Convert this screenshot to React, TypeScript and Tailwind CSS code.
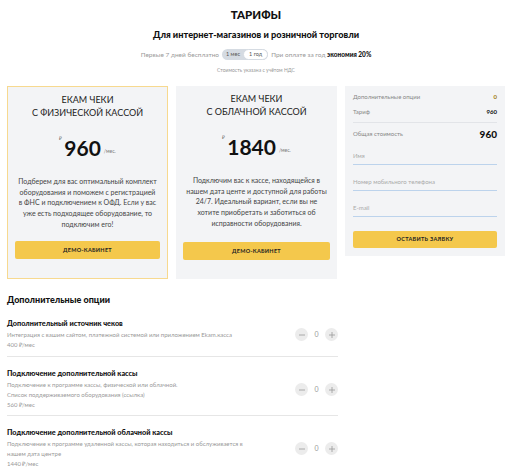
import React from 'react';

const font = { fontFamily: 'Lato, "Open Sans", "Liberation Sans", sans-serif' };

const Stepper: React.FC = () => (
  <div className="flex items-center gap-[6px]">
    <button className="flex h-[13px] w-[13px] items-center justify-center rounded-full bg-[#ececec] text-[#9a9a9a]">
      <svg width="8" height="8" viewBox="0 0 8 8"><path d="M1 4h6" stroke="currentColor" strokeWidth="0.8" /></svg>
    </button>
    <span className="w-[5px] text-center text-[7px] text-[#999]">0</span>
    <button className="flex h-[13px] w-[13px] items-center justify-center rounded-full bg-[#ececec] text-[#9a9a9a]">
      <svg width="8" height="8" viewBox="0 0 8 8"><path d="M1 4h6M4 1v6" stroke="currentColor" strokeWidth="0.8" /></svg>
    </button>
  </div>
);

const options = [
  {
    title: 'Дополнительный источник чеков',
    desc: ['Интеграция с вашим сайтом, платежной системой или приложением Ekam.касса'],
    price: '400 ₽/мес',
  },
  {
    title: 'Подключение дополнительной кассы',
    desc: ['Подключение к программе кассы, физической или облачной.', 'Список поддерживаемого оборудования (ссылка)'],
    price: '560 ₽/мес',
  },
  {
    title: 'Подключение дополнительной облачной кассы',
    desc: ['Подключение к программе удаленной кассы, которая находиться и обслуживается в', 'нашем дата центре'],
    price: '1440 ₽/мес',
  },
];

const TariffCard: React.FC<{ line2: string; price: string; lines: string[]; active?: boolean }> = ({ line2, price, lines, active }) => (
  <div className={`flex h-[193px] w-[161px] flex-col items-center bg-[#f3f4f6] px-[7px] pt-[6px] ${active ? 'border border-[#f7d98f]' : ''}`}>
    <div className="text-center text-[9px] leading-[13px] text-[#222]">
      <div>ЕКАМ ЧЕКИ</div>
      <div>{line2}</div>
    </div>
    <div className="mt-[15px] flex h-[28px] items-start">
      <span className="mt-[1px] text-[5px] text-[#555]">₽</span>
      <span className="ml-[2px] text-[21px] font-bold leading-[28px] text-[#111]">{price}</span>
      <span className="ml-[3px] mt-[14px] text-[5px] text-[#777]">/мес.</span>
    </div>
    <div className="mt-[14px] text-center text-[7px] leading-[10.7px] text-[#444]">
      {lines.map((l, i) => (
        <div key={i} className="whitespace-nowrap">{l}</div>
      ))}
    </div>
    <div className="flex-1" />
    <button className="mb-[19px] h-[18px] w-full rounded-[2px] bg-[#f4c84c] text-[5.5px] font-bold tracking-[0.3px] text-[#222]">
      ДЕМО-КАБИНЕТ
    </button>
  </div>
);

const Field: React.FC<{ label: string; first?: boolean }> = ({ label, first }) => (
  <div className={`${first ? 'mt-[10px]' : 'mt-[12px]'} border-b border-[#bcd3ec] pb-[3px] text-[6px] leading-[10px] text-[#aaa]`}>{label}</div>
);

export default function App() {
  return (
    <div className="h-[473px] w-[512px] overflow-hidden bg-white" style={font}>
      <div className="flex flex-col items-center pt-[6px]">
        <h1 className="text-[11.5px] font-black leading-[18px] text-[#111]">ТАРИФЫ</h1>
        <h2 className="mt-[4px] text-[9.2px] font-black leading-[14px] text-[#111]">Для интернет-магазинов и розничной торговли</h2>
        <div className="mt-[7px] flex items-center gap-[3px] text-[6.5px] text-[#999]">
          <span>Первые 7 дней бесплатно</span>
          <div className="flex h-[11px] items-center rounded-full bg-[#d5dbe2] pl-[4px]">
            <span className="pr-[3px] text-[5.5px] text-[#555]">1 мес</span>
            <span className="flex h-[11px] items-center rounded-full border border-[#d5dbe2] bg-white px-[5px] text-[5.5px] text-[#555]">1 год</span>
          </div>
          <span>При оплате за год <b className="font-black text-[#111]">экономия 20%</b></span>
        </div>
        <div className="mt-[6px] text-[5px] leading-[8px] text-[#999]">Стоимость указана с учётом НДС</div>
      </div>

      <div className="mt-[12px] flex items-start gap-[8px] px-[7px]">
        <TariffCard
          active
          line2="С ФИЗИЧЕСКОЙ КАССОЙ"
          price="960"
          lines={[
            'Подберем для вас оптимальный комплект',
            'оборудования и поможем с регистрацией',
            'в ФНС и подключением к ОФД. Если у вас',
            'уже есть подходящее оборудование, то',
            'подключим его!',
          ]}
        />
        <TariffCard
          line2="С ОБЛАЧНОЙ КАССОЙ"
          price="1840"
          lines={[
            'Подключим вас к кассе, находящейся в',
            'нашем дата центе и доступной для работы',
            '24/7. Идеальный вариант, если вы не',
            'хотите приобретать и заботиться об',
            'исправности оборудования.',
          ]}
        />
        <div className="h-[170px] w-[160px] bg-[#f3f4f6] px-[8px] pt-[6px]">
          <div className="flex items-center justify-between text-[6px] leading-[10px] text-[#888]">
            <span>Дополнительные опции</span>
            <span className="font-bold text-[#a07a10]">0</span>
          </div>
          <div className="mt-[5px] flex items-center justify-between border-b border-[#e2e4e8] pb-[5px] text-[6px] leading-[10px] text-[#888]">
            <span>Тариф</span>
            <span className="font-bold text-[#111]">960</span>
          </div>
          <div className="mt-[4px] flex items-center justify-between text-[6px] leading-[14px] text-[#888]">
            <span>Общая стоимость</span>
            <span className="text-[10px] font-black text-[#111]">960</span>
          </div>
          <Field first label="Имя" />
          <Field label="Номер мобильного телефона" />
          <Field label="E-mail" />
          <button className="mt-[14px] h-[17px] w-full rounded-[2px] bg-[#f4c84c] text-[5.5px] font-bold tracking-[0.3px] text-[#222]">
            ОСТАВИТЬ ЗАЯВКУ
          </button>
        </div>
      </div>

      <div className="w-[338px] pl-[7px] pt-[14px]">
        <h3 className="text-[9px] font-black leading-[14px] text-[#111]">Дополнительные опции</h3>
        <div className="mt-[12px]">
          {options.map((o, i) => (
            <div
              key={i}
              className={`flex items-center justify-between ${i < 2 ? 'border-b border-[#e6e6e6]' : ''} ${i === 0 ? 'pb-[6px]' : 'pt-[12px] pb-[5px]'}`}
            >
              <div>
                <div className="text-[7.3px] font-black leading-[10px] text-[#111]">{o.title}</div>
                <div className="mt-[1px] text-[6px] leading-[10px] text-[#999]">
                  {o.desc.map((d, j) => <div key={j}>{d}</div>)}
                </div>
                <div className="text-[6px] leading-[10px] text-[#999]">{o.price}</div>
              </div>
              <Stepper />
            </div>
          ))}
        </div>
      </div>
    </div>
  );
}
